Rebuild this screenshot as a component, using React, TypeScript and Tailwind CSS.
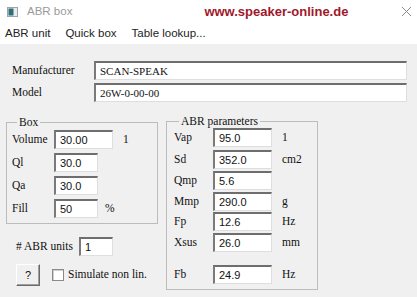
import React from 'react';

const serif = "font-['Liberation_Serif','Times_New_Roman',serif]";
const sans = "font-['Liberation_Sans',Arial,sans-serif]";

function Field({ value, w, h = 'h-[19px]', font = sans, size = 'text-[11px]' }: { value: string; w: string; h?: string; font?: string; size?: string }) {
    return (
        <div
            className={`${w} ${h} ${font} ${size} flex items-center bg-white pl-[4px] text-[#111] border-t-2 border-l-2 border-r border-b border-t-[#6e6e6e] border-l-[#7a7a7a] border-r-[#dedede] border-b-[#dedede] shrink-0`}
        >
            {value}
        </div>
    );
}

function Row({ label, value, w, unit, labelW, unitGap, className = '' }: { label: string; value: string; w: string; unit?: string; labelW: string; unitGap: string; className?: string }) {
    return (
        <div className={`flex items-center ${className}`}>
            <span className={`${labelW} shrink-0`}>{label}</span>
            <Field value={value} w={w} />
            {unit && <span className={unitGap}>{unit}</span>}
        </div>
    );
}

export default function App() {
    return (
        <div className={`w-[417px] h-[297px] overflow-hidden bg-[#f0f0f0] ${serif} text-[11.5px] text-[#111]`}>
            {/* Title bar */}
            <div className="h-[23px] bg-white flex items-center relative">
                <svg width="11" height="10" viewBox="0 0 11 10" className="ml-[7px]">
                    <rect x="0.5" y="0.5" width="10" height="9" fill="#e8ecee" stroke="#9aa4aa" />
                    <rect x="1.5" y="1.5" width="5" height="7" fill="#2e6f73" />
                </svg>
                <span className={`ml-[9px] ${sans} text-[11.5px] text-[#9a9a9a]`}>ABR box</span>
                <span className={`ml-[132px] ${sans} text-[13px] font-bold text-[#a0182c]`}>www.speaker-online.de</span>
                <svg width="11" height="11" viewBox="0 0 11 11" className="ml-auto mr-[5px]">
                    <path d="M1 1 L10 10 M10 1 L1 10" stroke="#8a8a8a" strokeWidth="1" />
                </svg>
            </div>

            {/* Menu bar */}
            <div className={`h-[21px] bg-white flex items-center pl-[5px] gap-[15px] ${sans} text-[11.5px] text-[#222]`}>
                <span>ABR unit</span>
                <span>Quick box</span>
                <span>Table lookup...</span>
            </div>

            {/* Driver */}
            <div className="pt-[17px] pl-[12px] flex flex-col gap-[3px]">
                <div className="flex items-center">
                    <span className="w-[82px] shrink-0">Manufacturer</span>
                    <Field value="SCAN-SPEAK" w="w-[313px]" font={serif} size="text-[11px]" />
                </div>
                <div className="flex items-center">
                    <span className="w-[82px] shrink-0">Model</span>
                    <Field value="26W-0-00-00" w="w-[313px]" font={serif} size="text-[11px]" />
                </div>
            </div>

            <div className="flex items-start pl-[6px] gap-[8px] mt-[13px]">
                {/* Left column */}
                <div className="flex flex-col mt-[1px]">
                    <fieldset className="w-[152px] border border-[#bcbcbc] pl-[5px] pb-[5px]">
                        <legend className="ml-[5px] px-[2px] leading-[13px]">Box</legend>
                        <div className="flex flex-col gap-[4px] mt-[1px]">
                            <Row label="Volume" value="30.00" w="w-[59px]" unit="1" labelW="w-[42px]" unitGap="ml-[10px]" />
                            <Row label="Ql" value="30.0" w="w-[44px]" labelW="w-[42px]" unitGap="" />
                            <Row label="Qa" value="30.0" w="w-[44px]" labelW="w-[42px]" unitGap="" />
                            <Row label="Fill" value="50" w="w-[44px]" unit="%" labelW="w-[42px]" unitGap="ml-[7px]" />
                        </div>
                    </fieldset>

                    <div className="flex items-center mt-[13px] pl-[10px]">
                        <span className="w-[63px] shrink-0"># ABR units</span>
                        <Field value="1" w="w-[34px]" />
                    </div>

                    <div className="flex items-center mt-[8px] pl-[10px]">
                        <button className={`w-[24px] h-[22px] bg-[#f0f0f0] border border-t-white border-l-white border-r-[#6a6a6a] border-b-[#6a6a6a] shadow-[inset_-1px_-1px_0_#a0a0a0] ${sans} text-[11px] flex items-center justify-center`}>
                            ?
                        </button>
                        <span className="ml-[12px] w-[12px] h-[12px] bg-white border border-[#8a8a8a] shadow-[inset_1px_1px_0_#cfcfcf]" />
                        <span className="ml-[4px]">Simulate non lin.</span>
                    </div>
                </div>

                {/* Right column */}
                <fieldset className="w-[152px] border border-[#bcbcbc] pl-[7px] pb-[5px]">
                    <legend className="ml-[5px] px-[2px] leading-[13px]">ABR parameters</legend>
                    <div className="flex flex-col">
                        <Row label="Vap" value="95.0" w="w-[59px]" unit="1" labelW="w-[39px]" unitGap="ml-[10px]" />
                        <Row label="Sd" value="352.0" w="w-[59px]" unit="cm2" labelW="w-[39px]" unitGap="ml-[10px]" className="mt-[3px]" />
                        <Row label="Qmp" value="5.6" w="w-[59px]" labelW="w-[39px]" unitGap="" className="mt-[2px]" />
                        <Row label="Mmp" value="290.0" w="w-[59px]" unit="g" labelW="w-[39px]" unitGap="ml-[10px]" className="mt-[2px]" />
                        <Row label="Fp" value="12.6" w="w-[59px]" unit="Hz" labelW="w-[39px]" unitGap="ml-[10px]" className="mt-[1px]" />
                        <Row label="Xsus" value="26.0" w="w-[59px]" unit="mm" labelW="w-[39px]" unitGap="ml-[10px]" className="mt-[2px]" />
                        <Row label="Fb" value="24.9" w="w-[59px]" unit="Hz" labelW="w-[39px]" unitGap="ml-[10px]" className="mt-[13px]" />
                    </div>
                </fieldset>
            </div>
        </div>
    );
}
